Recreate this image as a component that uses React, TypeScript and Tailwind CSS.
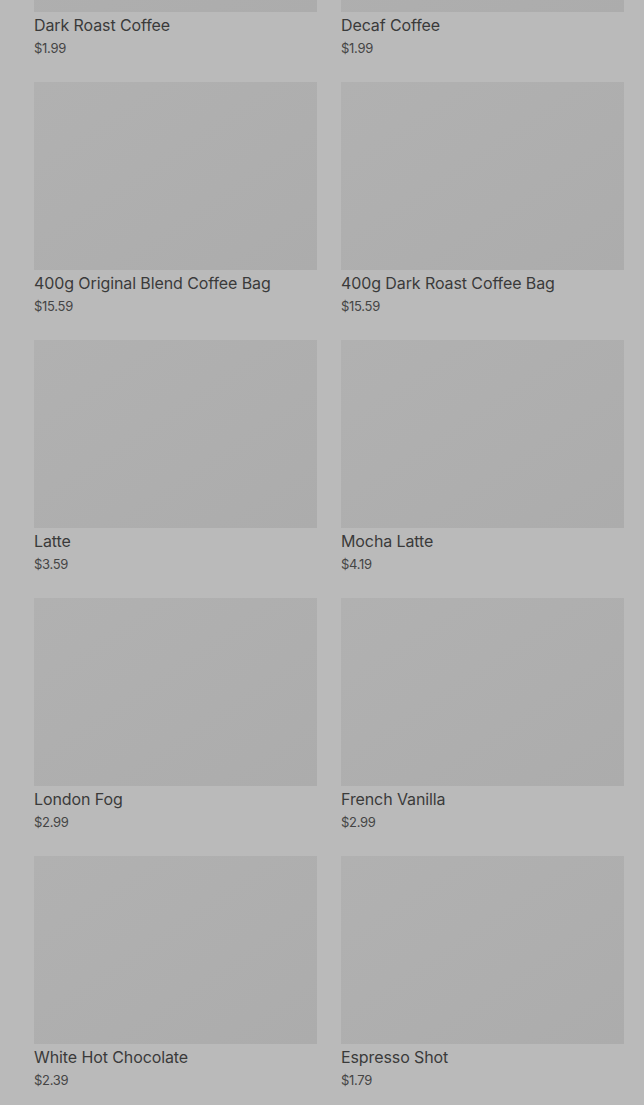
import React from "react";

const items: [string, string][] = [
  ["Dark Roast Coffee", "$1.99"],
  ["Decaf Coffee", "$1.99"],
  ["400g Original Blend Coffee Bag", "$15.59"],
  ["400g Dark Roast Coffee Bag", "$15.59"],
  ["Latte", "$3.59"],
  ["Mocha Latte", "$4.19"],
  ["London Fog", "$2.99"],
  ["French Vanilla", "$2.99"],
  ["White Hot Chocolate", "$2.39"],
  ["Espresso Shot", "$1.79"],
];

export default function App() {
  return (
    <div
      className="w-[644px] h-[1105px] overflow-hidden bg-[#bababa]"
      style={{ fontFamily: "Inter, 'Noto Sans', sans-serif" }}
    >
      <div className="-mt-[176px] pl-[34px] pr-[20px] grid grid-cols-2 gap-x-[24px] gap-y-[24px]">
        {items.map(([name, price]) => (
          <div key={name} className="flex flex-col">
            <div className="h-[188px] bg-gradient-to-br from-[#b1b1b1] to-[#acacac]" />
            <div className="mt-[1px] text-[16px] leading-[24px] text-[#3a3a3a] tracking-[-0.1px]">
              {name}
            </div>
            <div className="mt-[1px] text-[13px] leading-[20px] text-[#454545] tracking-[-0.3px]">
              {price}
            </div>
          </div>
        ))}
      </div>
    </div>
  );
}
